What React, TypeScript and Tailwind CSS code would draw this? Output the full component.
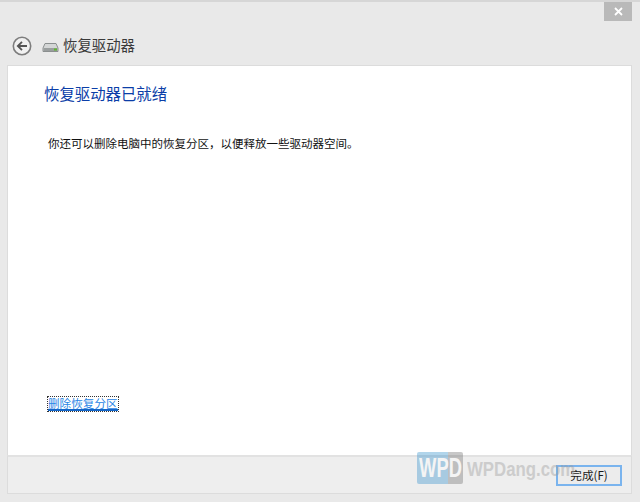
import React from 'react';

const font = { fontFamily: '"Noto Sans CJK SC", "Liberation Sans", sans-serif' };
const latin = { fontFamily: '"Liberation Sans", sans-serif' };

const DriveIcon = () => (
  <svg width="17" height="11" viewBox="0 0 17 11" className="shrink-0">
    <path d="M3 1.5 H14 L16 6 V9.5 H1 V6 Z" fill="#d4d6d6" stroke="#8b8f8f" strokeWidth="1" />
    <rect x="1.5" y="6" width="14" height="3" fill="#9a9e9e" />
    <rect x="12" y="6.5" width="3" height="2" fill="#5fb82f" />
  </svg>
);

const BackIcon = () => (
  <svg width="20" height="20" viewBox="0 0 20 20" className="shrink-0">
    <circle cx="10" cy="10" r="8.7" fill="#f1f1f1" stroke="#7d7d7d" strokeWidth="1.6" />
    <path d="M15 10 H6 M10 5.8 L5.8 10 L10 14.2" fill="none" stroke="#555" strokeWidth="1.8" />
  </svg>
);

export default function App() {
  return (
    <div className="w-[640px] h-[502px] relative overflow-hidden flex flex-col bg-[#e9e9e9] border-t-2 border-[#d6d6d6] px-[7px] pb-[8px]" style={font}>
      <div className="h-[63px] flex flex-col shrink-0">
        <div className="flex justify-end h-[19px] shrink-0 pr-[1px]">
          <div className="w-[28px] h-[19px] bg-[#b9b9b9] flex items-center justify-center">
            <svg width="9" height="9" viewBox="0 0 9 9">
              <path d="M1 1 L8 8 M8 1 L1 8" stroke="#fff" strokeWidth="1.8" />
            </svg>
          </div>
        </div>
        <div className="flex items-center mt-[15px] pl-[5px]">
          <BackIcon />
          <div className="ml-[10px] mt-[2px]"><DriveIcon /></div>
          <span className="ml-[4px] -mt-[3px] text-[14.4px] leading-[20px] text-[#3a3a3a]">恢复驱动器</span>
        </div>
      </div>

      <div className="flex-1 flex flex-col bg-white border border-[#dcdcdc] border-b-0 mr-[1px]">
        <div className="flex-1 flex flex-col pl-[36px] pt-[15px]">
          <h1 className="text-[15.4px] leading-[24px] font-normal text-[#0b3ea8]">恢复驱动器已就绪</h1>
          <p className="mt-[29px] ml-[4px] text-[11.5px] leading-[18px] text-[#111]">你还可以删除电脑中的恢复分区，以便释放一些驱动器空间。</p>
          <div className="mt-auto mb-[42px] ml-[4px]">
            <a className="inline-block h-[14px] text-[11.6px] leading-[13px] text-[#2a86e6] border-b-2 border-[#1466c8] outline-1 outline-dotted outline-[#333]">删除恢复分区</a>
          </div>
        </div>
        <div className="h-[39px] shrink-0 bg-[#eeeeee] border-t-2 border-[#e2e2e2] flex items-center justify-end pr-[9px] -mx-px border-x border-x-[#dcdcdc] border-b border-b-[#dcdcdc]">
          <button className="w-[66px] h-[21px] border-2 border-[#7ab4ee] bg-[#ececec] text-[11.6px] leading-[16px] text-[#1a1a1a] flex items-center justify-center">完成(F)</button>
        </div>
      </div>

      <div className="absolute left-[417px] top-[449px] flex items-center opacity-40">
        <div className="w-[46px] h-[32px] flex items-center justify-center rounded-[2px] bg-[linear-gradient(to_right,#3f97cf_0,#3f97cf_31px,#777_31px,#777_46px)]">
          <span className="shrink-0 scale-x-[0.68] text-[27px] leading-[32px] font-bold text-white" style={latin}>WPD</span>
        </div>
        <span className="ml-[4px] origin-left scale-x-[0.8] text-[21px] leading-[30px] font-bold text-[#9a9a9a] mt-[3px]" style={latin}>WPDang.com</span>
      </div>
    </div>
  );
}
